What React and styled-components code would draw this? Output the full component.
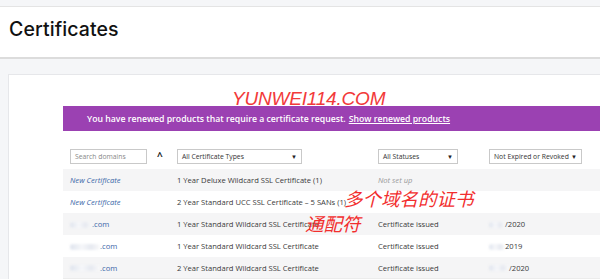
import React from 'react';
import styled, { createGlobalStyle } from 'styled-components';

const Global = createGlobalStyle`
  html, body { margin: 0; padding: 0; background: #f5f6f8; }
  body { font-family: "Open Sans", "Noto Sans", Arial, sans-serif; color: #333; overflow: hidden; }
`;

const Page = styled.div`
  width: 600px;
  height: 279px;
  position: relative;
  overflow: hidden;
`;

const Header = styled.header`
  background: #fff;
  border-top: 1px solid #e4e4e4;
  margin-top: 6px;
  height: 50px;
  border-bottom: 2px solid #dcdcdc;
  display: flex;
  align-items: center;
  padding-left: 9px;
`;

const Title = styled.h1`
  margin: 0;
  font-family: "Inter", "Open Sans", sans-serif;
  font-weight: 500;
  font-size: 19.5px;
  letter-spacing: 0.1px;
  color: #111;
  margin-top: -6px;
`;

const Body = styled.div`
  padding: 15px 0 0 8px;
`;

const Card = styled.section`
  background: #fff;
  border: 1px solid #e6e7ea;
  border-right: none;
  padding: 31px 0 0 54px;
  height: 220px;
`;

const Banner = styled.div`
  background: #9b41b2;
  color: #fff;
  height: 25px;
  display: flex;
  align-items: center;
  padding-left: 24px;
  font-size: 8.7px;
  font-weight: 600;
  white-space: nowrap;
`;

const BannerLink = styled.a`
  color: #fff;
  text-decoration: underline;
  margin-left: 3px;
`;

const Grid = styled.div`
  display: grid;
  grid-template-columns: 107px 201px 111px 1fr;
  align-items: center;
  padding-left: 7px;
  height: ${p => p.$h || 22}px;
  background: ${p => (p.$shade ? '#f5f5f6' : '#fff')};
  border-bottom: ${p => (p.$line ? '1px solid #ececec' : 'none')};
  box-sizing: border-box;
`;

const Filters = styled(Grid)`
  margin-top: 18px;
  height: 15px;
  margin-bottom: 5px;
  align-items: stretch;
`;

const FirstCell = styled.div`
  display: flex;
  align-items: center;
  gap: 10px;
`;

const Box = styled.div`
  box-sizing: border-box;
  height: 15px;
  width: ${p => p.$w}px;
  border: 1px solid #c9c9c9;
  background: #fff;
  display: flex;
  align-items: center;
  justify-content: space-between;
  padding: 0 4px 0 4px;
  font-size: 6.8px;
  white-space: nowrap;
  color: ${p => (p.$placeholder ? '#888' : '#333')};
`;

const Arrow = styled.span`
  font-size: 6px;
  color: #222;
`;

const Caret = styled.span`
  font-size: 10px;
  font-weight: 700;
  color: #222;
  margin-top: -2px;
`;

const Cell = styled.div`
  font-size: 7.6px;
  white-space: nowrap;
  color: ${p => p.$color || '#3a3a3a'};
  font-style: ${p => (p.$italic ? 'italic' : 'normal')};
`;

const Blur = styled.span`
  display: inline-block;
  width: ${p => p.$w}px;
  height: 6px;
  vertical-align: middle;
  background: linear-gradient(90deg, #dfe4ee, #f6f7fa 40%, #e6e9f0 70%, #fafafa);
  filter: blur(1px);
  border-radius: 3px;
`;

const Watermark = styled.div`
  position: absolute;
  left: 232px;
  top: 88px;
  font-family: "Liberation Sans", Arial, sans-serif;
  font-style: italic;
  font-size: 19px;
  color: #f23a3a;
  letter-spacing: -0.2px;
`;

const Note = styled.div`
  position: absolute;
  left: ${p => p.$x}px;
  top: ${p => p.$y}px;
  font-family: "Noto Sans CJK SC", sans-serif;
  font-style: italic;
  font-size: 18.5px;
  color: #f22e2e;
  line-height: 1;
`;

const rows = [
  { d: <Cell $italic $color="#3b67a8">New Certificate</Cell>, t: '1 Year Deluxe Wildcard SSL Certificate (1)', s: <Cell $italic $color="#9a9a9a">Not set up</Cell>, e: '' },
  { d: <Cell $italic $color="#3b67a8">New Certificate</Cell>, t: '2 Year Standard UCC SSL Certificate – 5 SANs (1)', s: null, e: '' },
  { d: <Cell $color="#3b67a8"><Blur $w={22} />.com</Cell>, t: '1 Year Standard Wildcard SSL Certificate', s: <Cell>Certificate issued</Cell>, e: <Cell><Blur $w={16} />/2020</Cell> },
  { d: <Cell $color="#3b67a8"><Blur $w={30} />.com</Cell>, t: '1 Year Standard Wildcard SSL Certificate', s: <Cell>Certificate issued</Cell>, e: <Cell><Blur $w={16} />2019</Cell> },
  { d: <Cell $color="#3b67a8"><Blur $w={30} />.com</Cell>, t: '2 Year Standard Wildcard SSL Certificate', s: <Cell>Certificate issued</Cell>, e: <Cell><Blur $w={20} />/2020</Cell> },
];

export default function App() {
  return (
    <Page>
      <Global />
      <Header>
        <Title>Certificates</Title>
      </Header>
      <Body>
        <Card>
          <Banner>
            You have renewed products that require a certificate request.
            <BannerLink>Show renewed products</BannerLink>
          </Banner>
          <Filters>
            <FirstCell>
              <Box $w={77} $placeholder>Search domains</Box>
              <Caret>^</Caret>
            </FirstCell>
            <div><Box $w={125}>All Certificate Types<Arrow>▼</Arrow></Box></div>
            <div><Box $w={80}>All Statuses<Arrow>▼</Arrow></Box></div>
            <div><Box $w={93}>Not Expired or Revoked<Arrow>▼</Arrow></Box></div>
          </Filters>
          {rows.map((r, i) => (
            <Grid key={i} $shade={i % 2 === 0} $line={i === rows.length - 1}>
              {r.d}
              <Cell>{r.t}</Cell>
              <div>{r.s}</div>
              <div>{r.e}</div>
            </Grid>
          ))}
        </Card>
      </Body>
      <Watermark>YUNWEI114.COM</Watermark>
      <Note $x={344} $y={189}>多个域名的证书</Note>
      <Note $x={305} $y={214}>通配符</Note>
    </Page>
  );
}
